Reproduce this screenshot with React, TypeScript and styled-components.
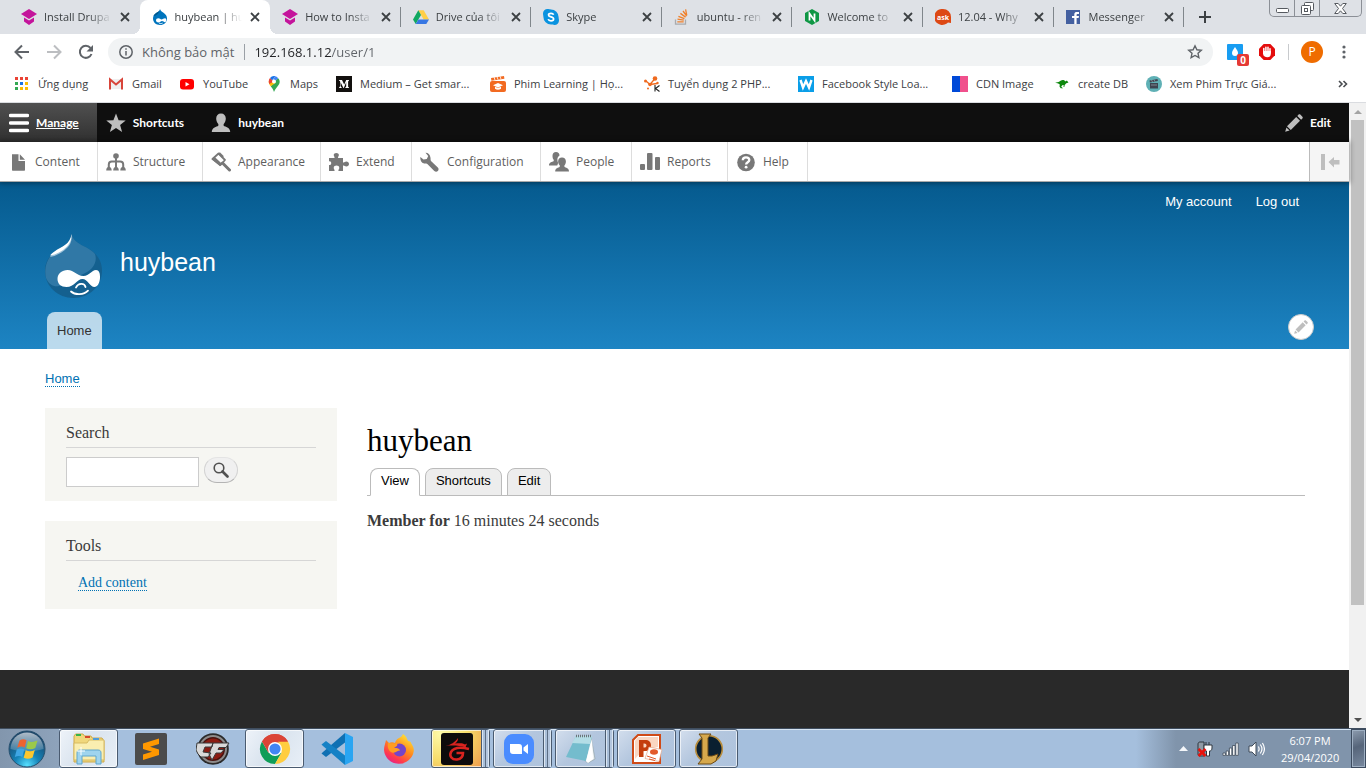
import React from "react";
import styled, { createGlobalStyle, css } from "styled-components";

const ui = `"Open Sans", "Noto Sans", sans-serif`;
const sans = `"Liberation Sans", Arial, sans-serif`;
const serif = `"Liberation Serif", Georgia, serif`;

const GlobalStyle = createGlobalStyle`
  *, *::before, *::after { box-sizing: border-box; }
  body { margin: 0; font-family: ${ui}; }
  button { font: inherit; border: 0; padding: 0; background: none; color: inherit; }
  a { color: inherit; text-decoration: none; }
  ul { list-style: none; margin: 0; padding: 0; }
  h1, h2, p { margin: 0; font-weight: 400; }
  svg { display: block; flex: none; }
`;

const Desktop = styled.div`
  display: flex;
  flex-direction: column;
  height: 100vh;
  overflow: hidden;
  background: #fff;
`;

/* ---------- browser: tab strip ---------- */

const TabStrip = styled.div`
  display: flex;
  align-items: center;
  flex: none;
  height: 34px;
  padding: 0 4px 0 9px;
  background: #dee1e6;
`;

const TabList = styled.div`
  display: flex;
  flex: 0 1 1175px;
  min-width: 0;
  height: 34px;
`;

const BrowserTab = styled.div<{ $active?: boolean; $divider?: boolean }>`
  display: flex;
  align-items: center;
  flex: 1 1 0;
  min-width: 0;
  position: relative;
  padding: 0 8px 0 12px;
  ${(p) =>
    p.$active &&
    css`
      background: #fff;
      border-radius: 8px 8px 0 0;
      &::before,
      &::after {
        content: "";
        position: absolute;
        bottom: 0;
        width: 8px;
        height: 8px;
      }
      &::before {
        left: -8px;
        background: radial-gradient(circle at 0 0, #dee1e6 8px, #fff 8px);
      }
      &::after {
        right: -8px;
        background: radial-gradient(circle at 100% 0, #dee1e6 8px, #fff 8px);
      }
    `}
  ${(p) =>
    p.$divider &&
    css`
      &::after {
        content: "";
        position: absolute;
        right: 0;
        top: 7px;
        width: 1px;
        height: 20px;
        background: #80868b;
      }
    `}
`;

const TabTitle = styled.button`
  flex: 1;
  min-width: 0;
  margin-left: 7px;
  text-align: left;
  overflow: hidden;
  white-space: nowrap;
  font-size: 11px;
  line-height: 18px;
  color: #3c4043;
  mask-image: linear-gradient(to left, transparent 0, #000 24px);
`;

const TabClose = styled.button`
  display: grid;
  place-items: center;
  width: 14px;
  height: 16px;
  margin-left: 6px;
`;

const NewTab = styled.button`
  display: grid;
  place-items: center;
  width: 28px;
  height: 28px;
  margin-left: 7px;
`;

const WindowButtons = styled.div`
  display: flex;
  align-self: flex-start;
  flex: none;
  width: 93px;
  height: 17px;
  margin-left: auto;
  border: 1px solid #8b8f96;
  border-top: 0;
  border-radius: 0 0 5px 5px;
  overflow: hidden;
`;

const WindowButton = styled.button<{ $wide?: boolean }>`
  display: grid;
  place-items: center;
  flex: ${(p) => (p.$wide ? 42 : 25)} 1 0;
  & + & {
    border-left: 1px solid #8b8f96;
  }
`;

/* ---------- browser: navigation ---------- */

const NavBar = styled.div`
  display: flex;
  align-items: center;
  flex: none;
  height: 36px;
  padding: 0 18px 0 12px;
`;

const NavButton = styled.button`
  display: grid;
  place-items: center;
  width: 20px;
  height: 20px;
  margin-right: 12px;
`;

const AddressBar = styled.div`
  display: flex;
  align-items: center;
  flex: 1;
  min-width: 0;
  height: 28px;
  padding: 0 10px 0 11px;
  border-radius: 14px;
  background: #f1f3f4;
  font-size: 13px;
  color: #5f6368;
`;

const Security = styled.span`
  margin: 0 10px 0 9px;
  white-space: nowrap;
`;

const Divider = styled.span<{ $light?: boolean }>`
  width: 1px;
  height: 16px;
  background: ${(p) => (p.$light ? "#c8cacd" : "#9aa0a6")};
`;

/* the host part of the address is dark, the path is grey */
const UrlInput = styled.input`
  flex: 1;
  min-width: 0;
  height: 22px;
  margin-left: 9px;
  padding: 0;
  border: 0;
  outline: 0;
  font: 13px ${ui};
  color: #202124;
  background: linear-gradient(to right, #202124 78px, #5f6368 78px);
  background-clip: text;
  -webkit-background-clip: text;
  -webkit-text-fill-color: transparent;
`;

const Extensions = styled.div`
  display: flex;
  align-items: center;
  flex: none;
  margin-left: 14px;
`;

const ExtButton = styled.button`
  position: relative;
  width: 16px;
  height: 16px;
  margin-right: 16px;
  &:nth-of-type(2) {
    margin-right: 13px;
  }
`;

const Badge = styled.span`
  position: absolute;
  left: 10px;
  top: 10px;
  width: 12px;
  height: 12px;
  border-radius: 2px;
  background: #e53935;
  color: #fff;
  font-size: 10px;
  font-weight: 700;
  line-height: 12px;
  text-align: center;
`;

const Avatar = styled.button`
  width: 22px;
  height: 22px;
  margin: 0 17px 0 12px;
  border-radius: 50%;
  background: #ef6c00;
  color: #fff;
  font-size: 12px;
  line-height: 22px;
`;

/* ---------- browser: bookmarks ---------- */

const Bookmarks = styled.nav`
  display: flex;
  align-items: center;
  flex: none;
  height: 33px;
  padding: 0 18px 4px 14px;
  border-bottom: 1px solid #dadce0;
`;

const Bookmark = styled.a<{ $w: number }>`
  display: flex;
  align-items: center;
  gap: 8px;
  flex: 0 1 ${(p) => p.$w}px;
  font-size: 11px;
  line-height: 20px;
  color: #3c4043;
  white-space: nowrap;
`;

const More = styled.button`
  margin-left: auto;
`;

/* ---------- page ---------- */

const Viewport = styled.div`
  display: flex;
  flex: 1;
  min-height: 0;
`;

const Page = styled.div`
  display: flex;
  flex-direction: column;
  flex: 1;
  min-width: 0;
`;

const AdminBar = styled.nav`
  display: flex;
  flex: none;
  height: 39px;
  background: #0f0f0f;
  color: #fff;
`;

const AdminTab = styled.a<{ $active?: boolean; $end?: boolean }>`
  display: flex;
  align-items: center;
  gap: 7px;
  padding: 0 18px 0 9px;
  font-family: Lato, ${ui};
  font-size: 12px;
  font-weight: 700;
  line-height: 18px;
  ${(p) =>
    p.$active &&
    css`
      background: linear-gradient(#505050, #303030);
      text-decoration: underline;
    `}
  ${(p) => p.$end && "margin-left: auto;"}
`;

const Tray = styled.nav`
  display: flex;
  flex: none;
  height: 40px;
  position: relative;
  background: #fff;
  border-bottom: 1px solid #aaa;
  box-shadow: 0 0 5px 1px rgba(0, 0, 0, 0.4);
`;

const TrayLink = styled.a<{ $w: number }>`
  display: flex;
  align-items: center;
  gap: 7px;
  flex: 0 1 ${(p) => p.$w}px;
  padding-left: 8px;
  border-right: 1px solid #ddd;
  color: #5e5e5e;
  font-size: 12px;
  white-space: nowrap;
`;

const TrayToggle = styled.button`
  display: grid;
  place-items: center;
  width: 40px;
  margin-left: auto;
  border-left: 1px solid #bbb;
  background: #f5f5f5;
`;

const Header = styled.header`
  display: flex;
  flex-direction: column;
  flex: none;
  background: linear-gradient(#055a8e, #1d84c3);
  color: #fff;
  font-family: ${sans};
`;

const AccountMenu = styled.nav`
  display: flex;
  justify-content: flex-end;
  gap: 24px;
  height: 40px;
  padding: 12px 50px 0 0;
  font-size: 13px;
  line-height: 16px;
`;

const Branding = styled.a`
  display: flex;
  gap: 17px;
  margin: 12px 45px 14px;
  font-size: 25px;
  line-height: 57px;
`;

const MainMenu = styled.nav`
  display: flex;
  justify-content: space-between;
  padding: 0 35px 0 47px;
`;

const MenuTab = styled.a`
  padding: 0 10px;
  border-radius: 8px 8px 0 0;
  background: rgba(255, 255, 255, 0.7);
  color: #333;
  font-size: 13px;
  line-height: 37px;
`;

const ContextButton = styled.button`
  display: grid;
  place-items: center;
  width: 26px;
  height: 26px;
  margin-top: 2px;
  border-radius: 50%;
  background: #fff;
  border: 1px solid #ccc;
`;

const Main = styled.div`
  flex: none;
  min-height: 321px;
  padding: 22px 44px 0 45px;
`;

const Crumb = styled.a`
  display: inline-block;
  height: 16px;
  border-bottom: 1px dotted #0071b3;
  color: #0071b3;
  font-family: ${sans};
  font-size: 13px;
  line-height: 15px;
`;

const Columns = styled.div`
  display: flex;
  gap: 30px;
  margin-top: 21px;
`;

const BreadcrumbNav = styled.nav`
  display: flex;
`;

const Sidebar = styled.aside`
  display: flex;
  flex-direction: column;
  gap: 20px;
  flex: 0 0 292px;
`;

const Block = styled.section`
  padding: 16px 21px 14px;
  background: #f6f6f2;
  font-family: ${serif};
`;

const BlockTitle = styled.h2`
  margin-bottom: 9px;
  padding-bottom: 5px;
  border-bottom: 1px solid #d6d6d6;
  color: #3b3b3b;
  font-size: 16px;
  line-height: 18px;
`;

const SearchForm = styled.form`
  display: flex;
  align-items: flex-start;
  gap: 5px;
`;

const SearchInput = styled.input`
  width: 133px;
  height: 30px;
  border: 1px solid #ccc;
  background: #fff;
`;

const SearchButton = styled.button`
  display: grid;
  place-items: center;
  width: 34px;
  height: 26px;
  border: 1px solid #e4e4e4;
  border-color: #e4e4e4 #d2d2d2 #b4b4b4;
  border-radius: 13px;
  background: #f0f0f0;
`;

const ToolList = styled.ul`
  padding: 5px 0 4px 12px;
`;

const ToolLink = styled.a`
  display: inline-block;
  height: 16px;
  border-bottom: 1px dotted #0071b3;
  color: #0071b3;
  font-size: 14px;
  line-height: 15px;
`;

const ToolItem = styled.li`
  display: flex;
`;

const Content = styled.main`
  flex: 1;
  min-width: 0;
  padding-top: 15px;
  font-family: ${serif};
`;

const PageTitle = styled.h1`
  color: #000;
  font-size: 31px;
  line-height: 36px;
`;

const PageTabs = styled.nav`
  display: flex;
  align-items: flex-end;
  gap: 5px;
  margin-top: 9px;
  padding-left: 3px;
  border-bottom: 1px solid #bbb;
`;

const PageTab = styled.a<{ $active?: boolean }>`
  height: 28px;
  margin-bottom: -1px;
  padding: 0 10px;
  border: 1px solid #bbb;
  border-bottom-color: ${(p) => (p.$active ? "#fff" : "#bbb")};
  border-radius: 8px 8px 0 0;
  background: ${(p) => (p.$active ? "#fff" : "#ededed")};
  color: #000;
  font-family: ${sans};
  font-size: 13px;
  line-height: 24px;
`;

const Membership = styled.p`
  margin-top: 14px;
  color: #3b3b3b;
  font-size: 16px;
  line-height: 22px;
`;

const Footer = styled.footer`
  flex: 1;
  background: #292929;
`;

const ScrollTrack = styled.div`
  display: flex;
  flex-direction: column;
  align-items: center;
  justify-content: space-between;
  flex: none;
  width: 17px;
  background: #f1f1f1;
`;

const ScrollArrow = styled.button`
  display: grid;
  place-items: center;
  width: 17px;
  height: 17px;
`;

const ScrollArea = styled.div`
  flex: 1;
  width: 13px;
`;

const ScrollThumb = styled.div`
  height: 82%;
  background: #c1c1c1;
`;

/* ---------- taskbar ---------- */

const Taskbar = styled.div`
  display: flex;
  align-items: stretch;
  flex: none;
  height: 40px;
  border-top: 1px solid #3f4d5e;
  box-shadow: inset 0 1px 0 #d5e3f2;
  background: linear-gradient(to left, #8094ab 0, #8094ab 190px, #a5bfdd 230px, #a5bfdd 100%);
`;

const StartArea = styled.div`
  display: grid;
  place-items: center;
  width: 59px;
  padding-right: 6px;
  background: linear-gradient(to right, #8296ad, #8ea3bb);
`;

const Tasks = styled.div`
  display: flex;
  gap: 3px;
`;

const TaskButton = styled.button<{ $state?: "open" | "focus" | "alert"; $stack?: boolean }>`
  display: grid;
  place-items: center;
  position: relative;
  width: 59px;
  height: 39px;
  border-radius: 3px;
  ${(p) => p.$stack && "padding-right: 8px;"}
  ${(p) =>
    p.$state &&
    css`
      border: 1px solid #4a5b70;
      box-shadow: inset 0 0 0 1px rgba(255, 255, 255, 0.65);
      background: ${p.$state === "focus"
        ? "linear-gradient(120deg, #eef3f9, #d9e3ee 45%, #e8eff7)"
        : p.$state === "alert"
        ? "radial-gradient(circle at 15% 10%, #fdf9a8, #f6dc6a 45%, #ee8c44)"
        : "linear-gradient(135deg, #d3deed, #b3c6de 45%, #aec3dd)"};
    `}
  ${(p) =>
    p.$stack &&
    css`
      &::after {
        content: "";
        position: absolute;
        right: 0;
        top: 0;
        bottom: 0;
        width: 8px;
        border-left: 1px solid #4a5b70;
        border-right: 1px solid #dbe6f2;
        background: linear-gradient(to right, #dbe6f2 1px, #a9bfd9 1px, #a9bfd9 3px, #5b6d84 3px, #5b6d84 4px, #b3c6de 4px);
      }
    `}
`;

const SystemTray = styled.div`
  display: flex;
  align-items: center;
  gap: 9px;
  margin-left: auto;
`;

const Clock = styled.time`
  width: 58px;
  margin-left: 7px;
  color: #fff;
  font-size: 11px;
  line-height: 17px;
  text-align: center;
  white-space: nowrap;
`;

const ShowDesktop = styled.button`
  width: 15px;
  height: 39px;
  margin-left: 12px;
  border: 1px solid #3c4b5f;
  box-shadow: inset 0 0 0 1px #9fb0c3;
  background: linear-gradient(160deg, #8d9caf, #56657a 45%, #78899f);
`;

/* ---------- drawings: tab and bookmark icons ---------- */

const Cap = () => (
  <svg width="16" height="16" viewBox="0 0 16 16" fill="#c4149b">
    <path d="M8 0l8 5-8 5-8-5z" />
    <path d="M3 8.500l5 3 5-3v4L8 16l-5-3.500z" />
  </svg>
);
const Drop = () => (
  <svg width="16" height="16" viewBox="0 0 16 16">
    <path d="M8 0c.5 2 2 2.800 3.500 3.800C13.700 5.300 15 7 15 9.500 15 13.300 12 16 8 16s-7-2.800-7-6.500C1 7 2.300 5.300 4.500 3.800 6.500 2.600 7.600 2 8 0z" fill="#0074bd" />
    <path d="M1.500 7c2-.3 5-1 6.500-6.500C7.600 2 6.500 2.600 4.500 3.800 3 4.800 2 5.800 1.500 7z" fill="#00598e" />
    <path d="M4 11.500c0-1.400 1-2.200 2.300-2.200 1.500 0 2.200 1.200 3.200 1.200S11.800 9.300 13 9.300s1.300 1 1.200 2c-.1 1.200-.6 1.900-1.300 1.900-1 0-1.700-1.200-2.900-1.200-1.300 0-1.900 1.400-3.500 1.400S4 12.600 4 11.500z" fill="#fff" />
    <path d="M7 14c1 .8 2.400.8 3.600.1" stroke="#fff" strokeWidth=".9" fill="none" />
  </svg>
);
const Drive = () => (
  <svg width="16" height="16" viewBox="0 0 16 16">
    <path d="M5.300 1.200h5.400L16 10.400h-5.400z" fill="#ffcf48" />
    <path d="M5.300 1.200L8 5.900 2.700 15 0 10.400z" fill="#11a861" />
    <path d="M5.400 10.400H16L13.300 15H2.700z" fill="#3777e3" />
  </svg>
);
const Skype = () => (
  <svg width="16" height="16" viewBox="0 0 16 16">
    <path d="M4.500 0C6 0 6.500.4 8 .4a7.600 7.600 0 0 1 7.600 7.600c0 1.500.4 2 .4 3.500A4.500 4.500 0 0 1 11.500 16c-1.500 0-2-.4-3.500-.4A7.600 7.600 0 0 1 .4 8C.4 6.500 0 6 0 4.500A4.500 4.500 0 0 1 4.500 0z" fill="#0a93e0" />
    <path d="M10.600 5.700C10.200 4.700 9.200 4.300 8 4.300c-1.500 0-2.500.6-2.500 1.700 0 2.500 5.100 1.300 5.100 3.900 0 1.200-1.100 1.900-2.600 1.900-1.400 0-2.500-.6-2.800-1.700" stroke="#fff" strokeWidth="1.700" fill="none" />
  </svg>
);
const Stack = () => (
  <svg width="16" height="16" viewBox="0 0 16 16" fill="none" strokeWidth="1.300">
    <path d="M1.500 10.500v4.700h10v-4.700" stroke="#a9abae" />
    <path d="M3.300 12.800h6.400M3.500 10.200l6.300.9M4.400 7.300l6 2.300M6.400 4.400l5.200 3.700M9 2l3.700 5M11.600.4l1.200 6" stroke="#f0802b" />
  </svg>
);
const Nginx = () => (
  <svg width="16" height="16" viewBox="0 0 16 16">
    <path d="M8 0l7 4v8l-7 4-7-4V4z" fill="#0f9745" />
    <path d="M5.500 11.500v-7l5 7v-7" stroke="#fff" strokeWidth="1.800" fill="none" />
  </svg>
);
const Ask = () => (
  <svg width="16" height="16" viewBox="0 0 16 16">
    <path d="M8 0a8 8 0 0 1 8 8v6l-3-.5A8 8 0 1 1 8 0z" fill="#dd4814" />
    <text x="8" y="10.500" fontFamily="Open Sans" fontWeight="700" fontSize="7" fill="#fff" textAnchor="middle">ask</text>
  </svg>
);
const Facebook = () => (
  <svg width="16" height="16" viewBox="0 0 16 16">
    <path d="M0 1h14v14H0z" fill="#4460a0" />
    <path d="M8.300 15V9H6V7h2.300V5.500C8.300 3.600 9.400 3 11 3h2v2h-1.300c-.8 0-1.100.3-1.100 1v1H13l-.4 2h-2v6z" fill="#fff" />
  </svg>
);
const Apps = () => (
  <svg width="16" height="16" viewBox="0 0 16 16">
    {["#ea4335", "#ea4335", "#ea4335", "#34a853", "#1a73e8", "#fbbc04", "#34a853", "#fbbc04", "#fbbc04"].map((c, i) => (
      <rect key={i} x={1 + (i % 3) * 5} y={1 + Math.floor(i / 3) * 5} width="3" height="3" fill={c} />
    ))}
  </svg>
);
const Gmail = () => (
  <svg width="16" height="16" viewBox="0 0 16 16">
    <path d="M1 3h14v10H1z" fill="#efefef" />
    <path d="M2 13.500v-10l6 5 6-5v10" stroke="#d8453a" strokeWidth="2" fill="none" />
  </svg>
);
const YouTube = () => (
  <svg width="16" height="16" viewBox="0 0 16 16">
    <rect x="1" y="3" width="14" height="10.500" rx="3" fill="#f00" />
    <path d="M6.500 6l4 2.200-4 2.300z" fill="#fff" />
  </svg>
);
const MapPin = () => (
  <svg width="16" height="16" viewBox="0 0 16 16">
    <path d="M8 16c-.7-2.500-2-4-3.300-5.700L11.900 2A5.300 5.300 0 0 1 13.200 8c-1.200 2.500-4.200 4.500-5.200 8z" fill="#34a853" />
    <path d="M4.700 10.300C3.500 8.800 2.700 7.300 2.700 5.500L6 3.800l3.800 3z" fill="#fbbc04" />
    <path d="M2.700 5.700A5.300 5.300 0 0 1 4 1.900l4 3.300-4.800 2.700z" fill="#ea4335" />
    <path d="M4 1.900A5.300 5.300 0 0 1 9.500.3L6.200 4.200z" fill="#1a73e8" />
    <path d="M9.500.3c1.100.4 2 1.200 2.600 2L9.500 5 7 3.300z" fill="#4285f4" />
    <circle cx="8" cy="5.400" r="2" fill="#fff" />
  </svg>
);
const MediumIcon = () => (
  <svg width="16" height="16" viewBox="0 0 16 16">
    <path d="M0 0h16v16H0z" fill="#12100e" />
    <path d="M3 4h3l2.200 4.600L10.200 4H13v.6l-.9.800v5.300l.9.700v.6H9.300v-.6l.9-.8V6.300L7.800 12h-.4L4.600 6.300v4l1.200 1.400v.3H3v-.3l1.100-1.400V5.300L3 4.400z" fill="#fff" />
  </svg>
);
const Film = () => (
  <svg width="16" height="16" viewBox="0 0 16 16">
    <rect x="0" y="5" width="16" height="11" rx="2" fill="#f26a21" />
    <path d="M1 2l13-2 .4 2.700-13 2z" fill="#f26a21" />
    <path d="M4 1l1 3M7 .6l1 3M10 .2l1 3" stroke="#fff" strokeWidth=".8" />
    <path d="M8 7l5 2.200-5 2.300-5-2.300z M5 10.800l3 1.300 3-1.300v2c-1.800 1.200-4.200 1.200-6 0z" fill="#fff" />
  </svg>
);
const Share = () => (
  <svg width="16" height="16" viewBox="0 0 16 16">
    <path d="M2 5l4 3.500 5-6M6 8.500l7-1" stroke="#ef6a1f" strokeWidth="1.300" fill="none" />
    <g fill="#ef6a1f"><circle cx="1.500" cy="5" r="1.500" /><circle cx="11" cy="2.500" r="2.300" /><circle cx="6" cy="8.500" r="1.800" /><circle cx="4" cy="12.500" r="1" /><circle cx="13.500" cy="7" r="1.200" /></g>
    <path d="M11 9v6.500M15.500 9.500L11.500 12.500l4 3" stroke="#222" strokeWidth="1.100" fill="none" />
  </svg>
);
const WBox = () => (
  <svg width="16" height="16" viewBox="0 0 16 16">
    <path d="M0 0h16v16H0z" fill="#0a9ee8" />
    <path d="M2.500 4l2.500 7.500L8 5l3 6.500L13.500 4" stroke="#fff" strokeWidth="2.400" fill="none" />
  </svg>
);
const Cdn = () => (
  <svg width="16" height="16" viewBox="0 0 16 16"><path d="M0 0h8v16H0z" fill="#0049d8" /><path d="M8 0h8v16H8z" fill="#f0508c" /></svg>
);
const Kangaroo = () => (
  <svg width="16" height="16" viewBox="0 0 16 16">
    <path d="M1 6.200c2 .6 3.800-.2 5.500-1.500 2-1.200 4-.8 5 .8l1.300-1 1.700 2-2.200.8-1.600 1.700-.4 2-.8-.1.200-1.900-1.500.2-1 1.600 1.900 1.500-2.400-.1-1.200-1.600.3-2.100C4.600 7.200 2.500 7.300 1 6.200z" fill="#0c870c" />
  </svg>
);
const Clap = () => (
  <svg width="16" height="16" viewBox="0 0 16 16">
    <circle cx="8" cy="8" r="8" fill="#5fb0b5" />
    <path d="M4 7h8v5.500H4zM3.500 4.500l8-1.500.4 2-8 1.500z" fill="#3d4450" />
    <path d="M5.500 4l1 2M8 3.600l1 2M5 9h6" stroke="#9aa5ae" strokeWidth=".7" />
  </svg>
);

/* ---------- drawings: admin icons ---------- */

const g = "#787878";
const AdminIcon: Record<string, React.ReactElement> = {
  menu: <svg width="20" height="20" viewBox="0 0 20 20"><path d="M1.500 2.500h17M1.500 10h17M1.500 17.500h17" stroke="#fff" strokeWidth="3.400" strokeLinecap="round" /></svg>,
  star: <svg width="20" height="20" viewBox="0 0 20 20"><path d="M10 .5l2.600 6.800 7.100.2-5.600 4.500 2 7L10 15l-6.100 4 2-7L.3 7.500l7.100-.2z" fill="#bebebe" /></svg>,
  user: <svg width="20" height="20" viewBox="0 0 20 20"><path d="M10 .5c3 0 4.800 2 4.800 5 0 2-.9 4-1.900 5.200-.7.900-.3 2.200.6 2.600 2.500.9 5.700 2 5.700 5.700H.8c0-3.700 3.200-4.800 5.700-5.700.9-.4 1.300-1.700.6-2.600C6.100 9.500 5.200 7.500 5.200 5.500c0-3 1.800-5 4.800-5z" fill="#bebebe" /></svg>,
  pencil: <svg width="18" height="18" viewBox="0 0 18 18" fill="#bebebe"><path d="M2 12.200L11.200 3l3.800 3.800L5.800 16zM12.300 1.900l1.300-1.300c.5-.5 1.200-.5 1.700 0l2.100 2.100c.5.500.5 1.200 0 1.700l-1.300 1.300zM1.400 13.400l3.200 3.200L.2 17.800z" /></svg>,
  file: <svg width="20" height="20" viewBox="0 0 20 20" fill={g}><path d="M4 2.300h6.500V9H17v8.700c0 .7-.3 1-1 1H5c-.7 0-1-.3-1-1zM11.800 2.300L17 7.800h-5.200z" /></svg>,
  tree: <svg width="20" height="20" viewBox="0 0 20 20"><path d="M10 4v12M2.800 16v-3.500c0-2 1-3 3-3h8.400c2 0 3 1 3 3V16" stroke={g} strokeWidth="2" fill="none" /><circle cx="10" cy="4" r="2.800" fill={g} /><path d="M.2 18.500c0-5 5.500-5 5.500 0zM7.200 18.500c0-5 5.600-5 5.600 0zM14.300 18.500c0-5 5.500-5 5.500 0z" fill={g} /></svg>,
  brush: <svg width="20" height="20" viewBox="0 0 20 20"><path d="M7.500 1.500l6.500 6.500-4.500 5L1.500 7z" fill="none" stroke={g} strokeWidth="1.800" strokeLinejoin="round" /><path d="M.5 7l2.700-2.500 8 7.500-2.200 2.300z" fill={g} /><path d="M8 1l4 4" stroke={g} strokeWidth="2.400" /><path d="M11.500 11l7 7" stroke={g} strokeWidth="3" strokeLinecap="round" /></svg>,
  puzzle: <svg width="20" height="20" viewBox="0 0 20 20" fill={g}><path d="M0 6h5.500c.4-1.300-.8-1.700-.8-3S5.900 1 7.300 1s2.600.7 2.600 2-1.200 1.700-.8 3H14v4.500c1.400.5 1.800-.9 3.300-.9 1.600 0 2.700 1 2.700 2.500s-1.100 2.500-2.700 2.500c-1.500 0-1.900-1.400-3.300-.9V19H9.500c-.5-1.400.8-1.800.8-3.100 0-1.500-1.400-2.300-2.800-2.300s-2.800.8-2.800 2.300c0 1.300 1.300 1.700.8 3.100H0V13c1.300.4 2.200-.5 2.200-1.800S1.300 9 0 9.500z" /></svg>,
  wrench: <svg width="20" height="20" viewBox="0 0 20 20"><path d="M5.500.8L8.200 4 6.800 7 3.500 7.500.4 5c-.5 3 1 6 4 6.500 1.300.3 2.500 0 3.200.7l6.700 6.700c1 1 2.500 1 3.500.2 1-1 1-2.600 0-3.500L11 9c-.6-.7-.3-1.700-.5-3.200C10 2.500 8 .7 5.500.8z" fill={g} /></svg>,
  people: <svg width="20" height="20" viewBox="0 0 20 20" fill={g}><path d="M7 0c2.200 0 3.500 1.400 3.500 3.400C8 5 8 8 9.200 11c-.7 1-.3 1.800-1 2.600H0C0 10.700 2 10 4 9.500c.9-.3 1-1.300.5-2C3.700 6.300 3.500 5 3.500 3.700 3.500 1.500 4.800 0 7 0z" /><path d="M13 5.500c2.400 0 3.900 1.600 3.900 4 0 1.500-.5 2.800-1.300 3.800-.6.800-.3 1.500.4 1.900 2 .7 4 1.300 4 4.300H6.200c0-3 2-3.600 4-4.300.7-.4 1-1.100.4-1.900-.8-1-1.500-2.300-1.500-3.800 0-2.400 1.500-4 3.900-4z" /></svg>,
  chart: <svg width="20" height="20" viewBox="0 0 20 20" fill={g}><rect x="0" y="12" width="5" height="6" rx="1" /><rect x="7" y="1" width="5.500" height="17" rx="1" /><rect x="15" y="5" width="5" height="13" rx="1" /></svg>,
  help: <svg width="20" height="20" viewBox="0 0 20 20"><circle cx="10" cy="10.500" r="8.800" fill={g} /><path d="M6.800 8.300C6.800 6.500 8 5.300 10 5.300s3.300 1.100 3.300 2.800c0 2.200-3.200 2.200-3.200 4.500" stroke="#fff" strokeWidth="2.300" fill="none" /><circle cx="10.100" cy="15.200" r="1.400" fill="#fff" /></svg>,
};

const Druplicon = () => (
  <svg width="58" height="64" viewBox="0 0 58 64">
    <path d="M26.500 0c1.500 7 8 10 15 13.500C51 18.500 57 26 57 36.500 57 52.500 44 64 28.500 64S0 52.500 0 37c0-9 4-14.500 9-18.500C17 13 25 11 26.500 0z" fill="#14608f" />
    <path d="M26.500 0c1.500 7 8 10 15 13.500 3.500 1.800 6 3.800 8.500 6.500 3 9-3 17-14 21-8 4-14 9-22 11-5 1-10-1-13-8-2-8 0-19 8-25.500C17 13 25 11 26.500 0z" fill="#3078a6" />
    <path d="M5 23c6-1 12-4 18-10 2-2 4-6 3.500-10C24 11 17 13 9 18.500 7.300 20 6 21.500 5 23z" fill="#9fc3da" />
    <path d="M5 21.500c6-1 12-4 17-9C25 9 27 5 26.500 0 25 11 17 12 9.500 17.500 7.500 19 6 20.300 5 21.500z" fill="#fff" />
    <path d="M12.500 45c0-5.500 4.500-9 10-9 7 0 9 6 16 6 6 0 8-6 12.500-6 3 0 4.300 3 4 8-.3 5-2.500 9-5.500 9-4.500 0-7-8-12-8-5.500 0-8 8-16 8-5.500 0-9-3-9-8z" fill="#fff" />
    <path d="M31 53.500c2-4.500 8.500-5 9.500-.5M26 57.500c4 3.800 13 3.600 17-.8" fill="none" stroke="#fff" strokeWidth="1.800" strokeLinecap="round" />
  </svg>
);

/* ---------- drawings: taskbar icons ---------- */

const StartOrb = () => (
  <svg width="38" height="38" viewBox="0 0 38 38">
    <defs>
      <radialGradient id="orb" cx=".5" cy=".95" r=".85"><stop offset="0" stopColor="#58e0ff" /><stop offset=".4" stopColor="#1583b8" /><stop offset="1" stopColor="#1b4468" /></radialGradient>
      <linearGradient id="gloss" x1="0" y1="0" x2="0" y2="1"><stop offset="0" stopColor="#fff" stopOpacity=".65" /><stop offset="1" stopColor="#fff" stopOpacity=".15" /></linearGradient>
    </defs>
    <circle cx="19" cy="19" r="18" fill="url(#orb)" stroke="#27506e" />
    <path d="M2.500 19a16.500 16.500 0 0 1 33 0c-10 3-23 3-33 0z" fill="url(#gloss)" />
    <path d="M11.500 10.500c2.500-1.600 5-1.600 7-.3L16.700 17.500c-2.300-1.200-4.500-1.200-7.500.2z" fill="#ee6330" />
    <path d="M20 11c2.500 1.300 5.500 1.200 9.500-.4l-2.200 7.500c-3 1.500-6.300 1.600-9.100.2z" fill="#9bc94a" />
    <path d="M8.800 19.500c2.500-1.400 5.300-1.300 7.500-.1l-2 7.500c-2-1.300-4.700-1.200-7.500.2z" fill="#3fa6e4" />
    <path d="M17.700 20.200c2.800 1.500 6 1.400 9.100-.1l-2.200 7.500c-3 1.600-6.200 1.700-8.900.2z" fill="#fdc72f" />
  </svg>
);
const Explorer = () => (
  <svg width="34" height="32" viewBox="0 0 34 32">
    <path d="M2 3l1.500-2H11l1.500 2H19l1 2h10l2 3v21H2z" fill="#f0d77c" stroke="#cda94a" />
    <path d="M2 10h13l2-3h15v20H2z" fill="#faeeb0" stroke="#d8bb62" />
    <path d="M4 2h5" stroke="#35b44a" strokeWidth="2" /><path d="M13 4h5" stroke="#d4472c" strokeWidth="2" /><path d="M21 6h6" stroke="#4e9ddb" strokeWidth="2" />
    <path d="M5 31V20c0-2 1-3 3-3h18c2 0 3 1 3 3v11h-5v-8H10v8z" fill="#9fd4ee" stroke="#5ea6cd" />
    <path d="M9 14v8M5 18h8" stroke="#fff" />
  </svg>
);
const Sublime = () => (
  <svg width="32" height="32" viewBox="0 0 32 32">
    <rect width="32" height="32" rx="2" fill="#4b4b4b" />
    <path d="M8 10.500l16-5v5.500l-9 2.800 9 2.800V22L8 27v-5.500l9-2.700-9-2.800z" fill="#ff9800" />
  </svg>
);
const CrossFire = () => (
  <svg width="34" height="32" viewBox="0 0 34 32">
    <circle cx="17" cy="16" r="14.800" fill="#4a1410" stroke="#2b2b2b" strokeWidth="2" />
    <circle cx="17" cy="16" r="13" fill="none" stroke="#8c8c8c" strokeWidth="2" />
    <circle cx="17" cy="16" r="10.500" fill="#8c1c12" />
    <path d="M1 10h16l-1 4H9l-2 5 8 1-3 4H5l-3-3-2-4zM17 10h16l-3 4.500h-7l-1 2h6l-3 3.500h-5l-4 7-3-6z" fill="#d9d9d9" stroke="#3a3a3a" />
  </svg>
);
const Chrome = () => (
  <svg width="32" height="32" viewBox="0 0 32 32">
    <path d="M16 16L3 8.500a15 15 0 0 1 26 0z" fill="#db4437" />
    <path d="M3 8.500A15 15 0 0 0 16 31l6.500-11.300L9.500 19.700z" fill="#0f9d58" />
    <path d="M29 8.500A15 15 0 0 1 16 31l6.500-11.300L19 8.500z" fill="#ffcd40" />
    <path d="M3 8.500l6.500 11.200L16 8.500h13a15 15 0 0 0-26 0z" fill="#db4437" />
    <circle cx="16" cy="16" r="7" fill="#fff" /><circle cx="16" cy="16" r="5.600" fill="#4285f4" />
  </svg>
);
const VSCode = () => (
  <svg width="34" height="34" viewBox="0 0 34 34">
    <path d="M25 1v9.500L6 25l-4.500-3.500L3 20z" fill="#0f70b3" />
    <path d="M25 33v-9.500L6 9l-4.500 3.500L3 14z" fill="#1581c5" />
    <path d="M25 1l8 4v24l-8 4z" fill="#2aa5f2" />
  </svg>
);
const Firefox = () => (
  <svg width="32" height="32" viewBox="0 0 32 32">
    <defs><linearGradient id="fx" x1=".85" y1=".05" x2=".25" y2="1"><stop offset="0" stopColor="#ffe83a" /><stop offset=".45" stopColor="#ff8a1c" /><stop offset=".8" stopColor="#ff3750" /><stop offset="1" stopColor="#e02290" /></linearGradient></defs>
    <path d="M20 1c4 3 4 5 5 7 2 0 3 1 3 2 2 3 3 5 2.800 8A15 15 0 0 1 1 17c0-4 1.500-7 2-10l3 3c2-1 4-1 6 0 1-3 2-4 4-5 2-1 3-2 4-4z" fill="url(#fx)" />
    <circle cx="16.500" cy="17" r="6.500" fill="#7545c9" />
    <path d="M5 10c4 0 6 1 9 0 1 2 0 4-3 4.500 2 1 5 0 6 3-3 0-4 3-8 2-3-1-5-5-4-9.500z" fill="#ff9d21" />
  </svg>
);
const Garena = () => (
  <svg width="32" height="32" viewBox="0 0 32 32">
    <rect width="32" height="32" rx="3" fill="#0d0b0c" />
    <path d="M4 13c6-1 10-4 13-8 0 3-1 4-3 5.500 5-.5 8-.5 10 1l2-1-1.500 4C19 12.500 11 12 4 13z" fill="#d8231f" />
    <path d="M28 16c-8-2-15-2-18 3-2 4 1 8 6 7.500 4-.5 6-3 6-6.500h-6.500" fill="none" stroke="#d8231f" strokeWidth="2.600" />
  </svg>
);
const Zoom = () => (
  <svg width="30" height="30" viewBox="0 0 30 30">
    <rect width="30" height="30" rx="9" fill="#4a8cff" />
    <path d="M6 10h9c2 0 3 1 3 3v7H9c-2 0-3-1-3-3zM19.500 13.500L24 10v10l-4.500-3.500z" fill="#fff" />
  </svg>
);
const Notepad = () => (
  <svg width="32" height="32" viewBox="0 0 32 32">
    <path d="M26 4l4 22-7 4-4-3z" fill="#e9eef0" stroke="#93a3a9" strokeWidth=".7" />
    <path d="M11 3h16l-6 25L1 24z" fill="#74bccd" />
    <path d="M11 3h16l-2 8-18-1z" fill="#b4dde6" />
    <path d="M21 28l6-22 1 20-5 4z" fill="#fff" />
    <path d="M11 3h16" stroke="#6b7579" strokeWidth="2.500" strokeDasharray="1 1" />
  </svg>
);
const PowerPoint = () => (
  <svg width="32" height="32" viewBox="0 0 32 32">
    <path d="M7 2h22v28H2V7z" fill="#fff" stroke="#cf4a17" strokeWidth="2" />
    <path d="M7 4h20v10c-8 1-17 4-23 12V8z" fill="#f4a376" opacity=".45" />
    <path d="M8 7h6c4 0 6 2 6 5.500S17.500 18 14 18h-1.500v6H8zM12.500 10.500v4c2 .3 3-.5 3-2s-1-2.200-3-2z" fill="#c43e0e" />
    <path d="M18 14l13 2.500-3 12-14-3z" fill="#fff" stroke="#e3a88d" strokeWidth=".7" />
    <ellipse cx="23" cy="19" rx="4" ry="2.700" fill="#e25a2b" /><path d="M16 23l9 3M18 26l6 1.500" stroke="#e25a2b" />
  </svg>
);
const League = () => (
  <svg width="32" height="32" viewBox="0 0 32 32">
    <circle cx="16" cy="16" r="13.300" fill="#0a1f30" stroke="#b98d3c" strokeWidth="1.600" />
    <path d="M6 1h12l-3 4v18h4l6-2-2 7-5 3H5l4-5V5z" fill="#d6a84c" stroke="#6b4a17" />
  </svg>
);

/* ---------- data ---------- */

const browserTabs = [
  { title: "Install Drupa", icon: <Cap /> },
  { title: "huybean | hu", icon: <Drop />, active: true },
  { title: "How to Insta", icon: <Cap />, divider: true },
  { title: "Drive của tôi", icon: <Drive />, divider: true },
  { title: "Skype", icon: <Skype />, divider: true },
  { title: "ubuntu - ren", icon: <Stack />, divider: true },
  { title: "Welcome to", icon: <Nginx />, divider: true },
  { title: "12.04 - Why", icon: <Ask />, divider: true },
  { title: "Messenger", icon: <Facebook />, divider: true },
];

const bookmarks: [string, number, React.ReactElement][] = [
  ["Ứng dụng", 94, <Apps />],
  ["Gmail", 71, <Gmail />],
  ["YouTube", 87, <YouTube />],
  ["Maps", 70, <MapPin />],
  ["Medium – Get smar...", 154, <MediumIcon />],
  ["Phim Learning | Họ...", 154, <Film />],
  ["Tuyển dụng 2 PHP...", 154, <Share />],
  ["Facebook Style Loa...", 154, <WBox />],
  ["CDN Image", 102, <Cdn />],
  ["create DB", 92, <Kangaroo />],
  ["Xem Phim Trực Giá...", 140, <Clap />],
];

const trayLinks: [string, number, string][] = [
  ["Content", 98, "file"],
  ["Structure", 105, "tree"],
  ["Appearance", 118, "brush"],
  ["Extend", 91, "puzzle"],
  ["Configuration", 129, "wrench"],
  ["People", 91, "people"],
  ["Reports", 96, "chart"],
  ["Help", 80, "help"],
];

const tasks: { name: string; icon: React.ReactElement; state?: "open" | "focus" | "alert"; stack?: boolean }[] = [
  { name: "Explorer", icon: <Explorer />, state: "focus" },
  { name: "Sublime Text", icon: <Sublime /> },
  { name: "CrossFire", icon: <CrossFire /> },
  { name: "Chrome", icon: <Chrome />, state: "focus" },
  { name: "Visual Studio Code", icon: <VSCode /> },
  { name: "Firefox", icon: <Firefox /> },
  { name: "Garena", icon: <Garena />, state: "alert", stack: true },
  { name: "Zoom", icon: <Zoom />, state: "open", stack: true },
  { name: "Notepad", icon: <Notepad />, state: "open", stack: true },
  { name: "PowerPoint", icon: <PowerPoint />, state: "open" },
  { name: "League of Legends", icon: <League />, state: "open" },
];

export default function App() {
  return (
    <Desktop>
      <GlobalStyle />
      <TabStrip>
        <TabList>
          {browserTabs.map((t) => (
            <BrowserTab key={t.title} $active={t.active} $divider={t.divider}>
              {t.icon}
              <TabTitle>{t.title}</TabTitle>
              <TabClose aria-label="Close tab">
                <svg width="10" height="10" viewBox="0 0 10 10"><path d="M1 1l8 8M9 1L1 9" stroke="#3c4043" strokeWidth="1.800" /></svg>
              </TabClose>
            </BrowserTab>
          ))}
        </TabList>
        <NewTab aria-label="New tab">
          <svg width="12" height="12" viewBox="0 0 12 12"><path d="M6 0v12M0 6h12" stroke="#3c4043" strokeWidth="2" /></svg>
        </NewTab>
        <WindowButtons>
          <WindowButton aria-label="Minimize">
            <svg width="13" height="12" viewBox="0 0 13 12"><rect x=".5" y="6.500" width="12" height="4" rx="1" fill="#fff" stroke="#55595f" /></svg>
          </WindowButton>
          <WindowButton aria-label="Restore">
            <svg width="13" height="13" viewBox="0 0 13 13" fill="#fff" stroke="#55595f"><rect x="3.500" y=".5" width="9" height="8" rx="1" /><rect x=".5" y="3.500" width="9" height="9" rx="1" /><rect x="3.500" y="6.500" width="3" height="3" /></svg>
          </WindowButton>
          <WindowButton $wide aria-label="Close">
            <svg width="13" height="11" viewBox="0 0 13 11"><path d="M.7.500h3.500l2.300 2.700L8.800.500h3.500L8.500 5.500l3.800 5H8.800L6.500 7.800l-2.300 2.700H.7l3.800-5z" fill="#fff" stroke="#55595f" /></svg>
          </WindowButton>
        </WindowButtons>
      </TabStrip>

      <NavBar>
        <NavButton aria-label="Back">
          <svg width="16" height="16" viewBox="0 0 16 16" fill="none" stroke="#5f6368" strokeWidth="2"><path d="M15 8H2M8 1.500L1.500 8 8 14.500" /></svg>
        </NavButton>
        <NavButton aria-label="Forward">
          <svg width="16" height="16" viewBox="0 0 16 16" fill="none" stroke="#bcbec1" strokeWidth="2"><path d="M1 8h13M8 1.500L14.500 8 8 14.500" /></svg>
        </NavButton>
        <NavButton aria-label="Reload">
          <svg width="16" height="16" viewBox="0 0 16 16"><path d="M13.500 10A6 6 0 1 1 12.500 4" fill="none" stroke="#5f6368" strokeWidth="2" /><path d="M15 1v6.500H8.500z" fill="#5f6368" /></svg>
        </NavButton>
        <AddressBar>
          <svg width="14" height="14" viewBox="0 0 14 14" fill="none" stroke="#5f6368" strokeWidth="1.500"><circle cx="7" cy="7" r="6.200" /><path d="M7 6v4.500M7 3.300v1.500" /></svg>
          <Security>Không bảo mật</Security>
          <Divider />
          <UrlInput aria-label="Address" defaultValue="192.168.1.12/user/1" />
          <svg width="16" height="16" viewBox="0 0 16 16"><path d="M8 1.800l1.900 4 4.400.5-3.300 3 .9 4.400L8 11.500l-3.900 2.200.9-4.400-3.300-3 4.400-.5z" fill="none" stroke="#5f6368" strokeWidth="1.400" /></svg>
        </AddressBar>
        <Extensions>
          <ExtButton aria-label="Downloader">
            <svg width="16" height="16" viewBox="0 0 16 16"><rect width="16" height="16" rx="1" fill="#189df2" /><path d="M8 3c2 3 3 4.300 3 6a3 3 0 0 1-6 0c0-1.700 1-3 3-6z" fill="#fff" /></svg>
            <Badge>0</Badge>
          </ExtButton>
          <ExtButton aria-label="Ad blocker">
            <svg width="16" height="16" viewBox="0 0 16 16"><path d="M4.700 0h6.600L16 4.700v6.600L11.300 16H4.700L0 11.300V4.700z" fill="#e40d0d" /><path d="M4.800 8V4.500M6.900 8V3.300M9 8V3.300M11 9V4.800" stroke="#fff" strokeWidth="1.500" strokeLinecap="round" /><path d="M4 7h7.800v3c0 2-1.300 3.300-3.300 3.300C6 13.300 4 12 4 9.500z" fill="#fff" /></svg>
          </ExtButton>
          <Divider $light />
          <Avatar>P</Avatar>
          <button aria-label="Browser menu">
            <svg width="8" height="16" viewBox="0 0 8 16" fill="#5f6368"><circle cx="4" cy="3" r="1.600" /><circle cx="4" cy="8" r="1.600" /><circle cx="4" cy="13" r="1.600" /></svg>
          </button>
        </Extensions>
      </NavBar>

      <Bookmarks aria-label="Bookmarks">
        {bookmarks.map(([label, w, icon]) => (
          <Bookmark key={label} href="#" $w={w}>{icon}{label}</Bookmark>
        ))}
        <More aria-label="More bookmarks">
          <svg width="10" height="8" viewBox="0 0 10 8" fill="none" stroke="#4a4d51" strokeWidth="1.600"><path d="M1 1l3 3-3 3M5.500 1l3 3-3 3" /></svg>
        </More>
      </Bookmarks>

      <Viewport>
        <Page>
          <AdminBar aria-label="Administration">
            <AdminTab href="#" $active>{AdminIcon.menu}Manage</AdminTab>
            <AdminTab href="#">{AdminIcon.star}Shortcuts</AdminTab>
            <AdminTab href="#">{AdminIcon.user}huybean</AdminTab>
            <AdminTab href="#" $end>{AdminIcon.pencil}Edit</AdminTab>
          </AdminBar>
          <Tray aria-label="Manage">
            {trayLinks.map(([label, w, icon]) => (
              <TrayLink key={label} href="#" $w={w}>{AdminIcon[icon]}{label}</TrayLink>
            ))}
            <TrayToggle aria-label="Vertical orientation">
              <svg width="20" height="16" viewBox="0 0 20 16" fill="#bebebe"><path d="M1 0h4v16H1zM8.500 8L14 3v3h5.500v4.500H14v3z" /></svg>
            </TrayToggle>
          </Tray>

          <Header>
            <AccountMenu aria-label="User account">
              <a href="#">My account</a>
              <a href="#">Log out</a>
            </AccountMenu>
            <Branding href="#"><Druplicon />huybean</Branding>
            <MainMenu aria-label="Main">
              <MenuTab href="#">Home</MenuTab>
              <ContextButton aria-label="Configure block">
                <svg width="14" height="14" viewBox="0 0 18 18" fill="#bebebe"><path d="M2 12.200L11.200 3l3.800 3.800L5.800 16zM12.300 1.900l1.300-1.300c.5-.5 1.200-.5 1.700 0l2.100 2.100c.5.500.5 1.200 0 1.700l-1.300 1.300zM1.400 13.400l3.200 3.200L.2 17.800z" /></svg>
              </ContextButton>
            </MainMenu>
          </Header>

          <Main>
            <BreadcrumbNav aria-label="Breadcrumb"><Crumb href="#">Home</Crumb></BreadcrumbNav>
            <Columns>
              <Sidebar>
                <Block>
                  <BlockTitle>Search</BlockTitle>
                  <SearchForm>
                    <SearchInput type="search" aria-label="Search" />
                    <SearchButton type="button" aria-label="Search">
                      <svg width="16" height="16" viewBox="0 0 16 16" fill="none" stroke="#505050"><circle cx="6" cy="6" r="4.800" strokeWidth="1.600" /><path d="M9.500 9.500l5 5" strokeWidth="2.600" strokeLinecap="round" /></svg>
                    </SearchButton>
                  </SearchForm>
                </Block>
                <Block>
                  <BlockTitle>Tools</BlockTitle>
                  <ToolList><ToolItem><ToolLink href="#">Add content</ToolLink></ToolItem></ToolList>
                </Block>
              </Sidebar>
              <Content>
                <PageTitle>huybean</PageTitle>
                <PageTabs aria-label="Tabs">
                  <PageTab href="#" $active>View</PageTab>
                  <PageTab href="#">Shortcuts</PageTab>
                  <PageTab href="#">Edit</PageTab>
                </PageTabs>
                <Membership><b>Member for</b> 16 minutes 24 seconds</Membership>
              </Content>
            </Columns>
          </Main>
          <Footer />
        </Page>
        <ScrollTrack>
          <ScrollArrow aria-label="Scroll up"><svg width="8" height="4" viewBox="0 0 8 4"><path d="M4 0l4 4H0z" fill="#a3a3a3" /></svg></ScrollArrow>
          <ScrollArea><ScrollThumb /></ScrollArea>
          <ScrollArrow aria-label="Scroll down"><svg width="8" height="4" viewBox="0 0 8 4"><path d="M0 0h8L4 4z" fill="#505050" /></svg></ScrollArrow>
        </ScrollTrack>
      </Viewport>

      <Taskbar>
        <StartArea><button aria-label="Start"><StartOrb /></button></StartArea>
        <Tasks>
          {tasks.map((t) => (
            <TaskButton key={t.name} aria-label={t.name} $state={t.state} $stack={t.stack}>{t.icon}</TaskButton>
          ))}
        </Tasks>
        <SystemTray>
          <svg width="9" height="5" viewBox="0 0 9 5"><path d="M4.500 0L9 5H0z" fill="#f4f7fa" /></svg>
          <svg width="16" height="16" viewBox="0 0 16 16"><path d="M1 3c0-1.300 1-2 2-2h4v14H3c-1 0-2-.7-2-2z" fill="#8f9aa5" stroke="#2e363e" /><path d="M9 1v3M12 1v3M7 4h8v3c0 2-1 3-2.500 3v5H9.500v-5C8 10 7 9 7 7z" fill="#fff" stroke="#2e363e" /><path d="M1.500 8l7 7M8.500 8l-7 7" stroke="#e8120c" strokeWidth="2.600" /></svg>
          <svg width="17" height="14" viewBox="0 0 17 14" fill="#fff" stroke="#3e4a58" strokeWidth=".8"><path d="M1 11h2.400v2.400H1zM4.200 9h2.400v4.400H4.200zM7.400 6h2.400v7.400H7.400zM10.600 3.500H13v9.900h-2.400zM13.800 1h2.400v12.400h-2.400z" /></svg>
          <svg width="17" height="16" viewBox="0 0 17 16"><path d="M1 5h3l4-4v14l-4-4H1z" fill="#fff" stroke="#3e4a58" /><path d="M10.300 5.500c1 1.500 1 3.500 0 5M12.300 3.500c2 2.700 2 6.300 0 9M14.400 2c2.500 3.700 2.500 8.300 0 12" fill="none" stroke="#fff" strokeWidth="1.200" /></svg>
          <Clock>6:07 PM<br />29/04/2020</Clock>
        </SystemTray>
        <ShowDesktop aria-label="Show desktop" />
      </Taskbar>
    </Desktop>
  );
}
